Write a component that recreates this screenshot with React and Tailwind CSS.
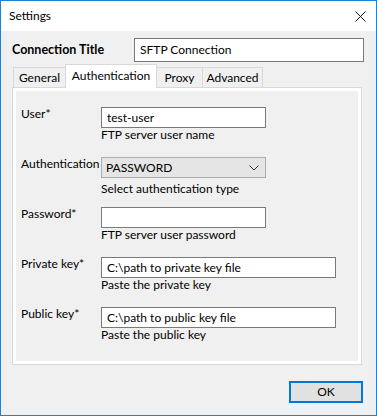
import React from "react";

function Field({ label, hint, width, value, select, hintGap }) {
  return (
    <div className="flex h-[50px]">
      <div className="w-[80px] leading-[14px]">{label}</div>
      <div className="flex flex-col">
        {select ? (
          <div className="h-[21px] w-[165px] border border-[#adadad] bg-[#e5e5e5] flex items-center justify-between pl-[4px] pr-[6px]">
            <span className="leading-[14px]">{value}</span>
            <svg width="10" height="6" viewBox="0 0 10 6">
              <polyline points="0.5,0.5 5,5 9.5,0.5" fill="none" stroke="#333" strokeWidth="1" />
            </svg>
          </div>
        ) : (
          <div
            className={`h-[21px] border border-[#7a7a7a] bg-white flex items-center pl-[5px] ${width}`}
          >
            <span className="leading-[14px]">{value}</span>
          </div>
        )}
        <div className={`leading-[14px] ${hintGap ? "mt-[4px]" : "mt-0"}`}>{hint}</div>
      </div>
    </div>
  );
}

export default function App() {
  return (
    <div
      className="w-[377px] h-[416px] border border-[#1883d7] bg-[#f0f0f0] flex flex-col text-[12px] text-black"
      style={{ fontFamily: "Lato, 'Noto Sans', sans-serif" }}
    >
      <div className="h-[30px] bg-white flex items-center justify-between pl-[8px] pr-[10px]">
        <span className="leading-[14px]">Settings</span>
        <svg width="11" height="11" viewBox="0 0 11 11">
          <line x1="0.5" y1="0.5" x2="10.5" y2="10.5" stroke="#111" strokeWidth="1" />
          <line x1="10.5" y1="0.5" x2="0.5" y2="10.5" stroke="#111" strokeWidth="1" />
        </svg>
      </div>
      <div className="flex flex-col pl-[11px] pt-[7px]">
        <div className="flex items-center h-[23px]">
          <div className="w-[122px] font-bold text-[12.5px] leading-[14px]">Connection Title</div>
          <div className="w-[230px] h-[24px] border border-[#7a7a7a] bg-white flex items-center pl-[5px]">
            <span className="leading-[14px]">SFTP Connection</span>
          </div>
        </div>
        <div className="flex items-end h-[23px] mt-[3px] pl-[1px]">
          <div className="w-[52px] h-[20px] border-l border-t border-[#d9d9d9] flex items-center justify-center leading-[14px]">
            General
          </div>
          <div className="relative z-10 -mb-[1px] w-[92px] h-[24px] bg-white border-l border-t border-r border-[#d9d9d9] flex items-center justify-center pb-[2px] leading-[14px]">
            Authentication
          </div>
          <div className="w-[46px] h-[20px] border-t border-r border-[#d9d9d9] flex items-center justify-center leading-[14px]">
            Proxy
          </div>
          <div className="w-[60px] h-[20px] border-t border-r border-[#d9d9d9] flex items-center justify-center leading-[14px]">
            Advanced
          </div>
        </div>
        <div className="w-[350px] h-[278px] border border-[#d9d9d9] bg-white p-[3px]">
          <div className="w-full h-full bg-[#f0f0f0] pl-[5px] pt-[16px] flex flex-col">
            <Field label="User*" value="test-user" hint="FTP server user name" width="w-[165px]" />
            <Field label="Authentication" value="PASSWORD" hint="Select authentication type" select hintGap />
            <Field label="Password*" value="" hint="FTP server user password" width="w-[165px]" />
            <Field
              label="Private key*"
              value="C:\path to private key file"
              hint="Paste the private key"
              width="w-[235px]"
            />
            <Field
              label="Public key*"
              value="C:\path to public key file"
              hint="Paste the public key"
              width="w-[235px]"
            />
          </div>
        </div>
        <div className="flex justify-end pr-[13px] mt-[16px]">
          <div className="w-[74px] h-[22px] border-2 border-[#0078d7] bg-[#e1e1e1] flex items-center justify-center leading-[14px]">
            OK
          </div>
        </div>
      </div>
    </div>
  );
}
